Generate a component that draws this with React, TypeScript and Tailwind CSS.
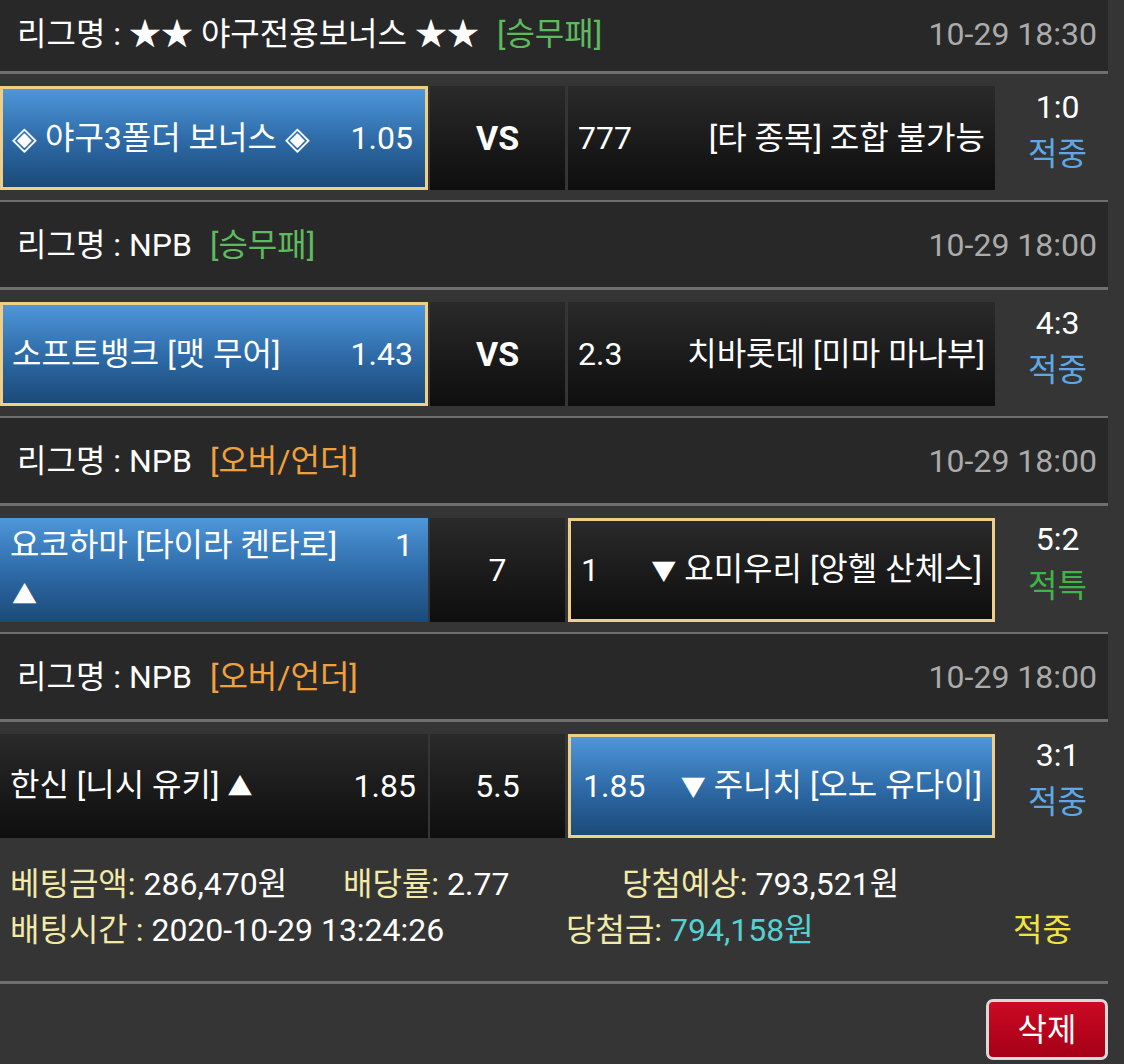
import React from 'react';

type Tone = 'blue' | 'black';

function Cell({
  tone,
  picked,
  className = '',
  children,
}: {
  tone: Tone;
  picked?: boolean;
  className?: string;
  children: React.ReactNode;
}) {
  const bg =
    tone === 'blue'
      ? 'bg-linear-to-b from-[#4e97da] via-[#2f6ca9] to-[#1b4a79]'
      : 'bg-linear-to-b from-[#2a2a2a] to-[#0e0e0e]';
  const border = picked ? 'border-[3px] border-[#efcf86]' : '';
  return (
    <div className={`h-[104px] shrink-0 text-white ${bg} ${border} ${className}`}>
      {children}
    </div>
  );
}

// triangles from the CJK font come out too wide at full size
function Tri({ up }: { up?: boolean }) {
  return <span className="text-[25px]">{up ? '▲' : '▼'}</span>;
}

function Header({ name, tag, tagColor, time, first }: { name: string; tag: string; tagColor: string; time: string; first?: boolean }) {
  return (
    <div
      className={`flex items-center justify-between bg-[#282828] pl-[17px] pr-[11px] ${
        first ? 'h-[71px] pb-[4px]' : 'h-[85px]'
      }`}
    >
      <div className="flex items-center text-white">
        <span>{name}</span>
        <span className={`ml-[18px] ${tagColor}`}>{tag}</span>
      </div>
      <span className="text-[#ababab]">{time}</span>
    </div>
  );
}

function Score({ score, result, color }: { score: string; result: string; color: string }) {
  return (
    <div className="flex h-[104px] flex-1 flex-col items-center justify-center pb-[14px] pl-[12px] leading-[47px]">
      <span className="text-white">{score}</span>
      <span className={color}>{result}</span>
    </div>
  );
}

function Line({ thick }: { thick?: boolean }) {
  return <div className={`${thick ? 'h-[3px]' : 'h-[2px]'} bg-[#6f6f6f]`} />;
}

function MatchRow({ children, last }: { children: React.ReactNode; last?: boolean }) {
  return <div className={`flex items-start pt-[12px] ${last ? '' : 'pb-[10px]'}`}>{children}</div>;
}

export default function App() {
  return (
    <div className="min-h-screen bg-[#353535] font-['Roboto','Noto_Sans_CJK_KR',sans-serif] text-[32px] leading-[40px]">
      <div className="w-[1108px]">
        <Header first name="리그명 : ★★ 야구전용보너스 ★★" tag="[승무패]" tagColor="text-[#5dba5d]" time="10-29 18:30" />
        <Line thick />
        <MatchRow>
          <Cell tone="blue" picked className="flex w-[428px] items-center justify-between pl-[9px] pr-[12px]">
            <span>◈ 야구3폴더 보너스 ◈</span>
            <span>1.05</span>
          </Cell>
          <Cell tone="black" className="ml-[2px] flex w-[135px] items-center justify-center text-[34px] font-bold">
            VS
          </Cell>
          <Cell tone="black" className="ml-[3px] flex w-[427px] items-center justify-between pl-[10px] pr-[10px]">
            <span>777</span>
            <span>[타 종목] 조합 불가능</span>
          </Cell>
          <Score score="1:0" result="적중" color="text-[#5ea8e6]" />
        </MatchRow>
        <Line />

        <Header name="리그명 : NPB" tag="[승무패]" tagColor="text-[#5dba5d]" time="10-29 18:00" />
        <Line thick />
        <MatchRow>
          <Cell tone="blue" picked className="flex w-[428px] items-center justify-between pl-[9px] pr-[12px]">
            <span>소프트뱅크 [맷 무어]</span>
            <span>1.43</span>
          </Cell>
          <Cell tone="black" className="ml-[2px] flex w-[135px] items-center justify-center text-[34px] font-bold">
            VS
          </Cell>
          <Cell tone="black" className="ml-[3px] flex w-[427px] items-center justify-between pl-[10px] pr-[10px]">
            <span>2.3</span>
            <span>치바롯데 [미마 마나부]</span>
          </Cell>
          <Score score="4:3" result="적중" color="text-[#5ea8e6]" />
        </MatchRow>
        <Line />

        <Header name="리그명 : NPB" tag="[오버/언더]" tagColor="text-[#f0a13c]" time="10-29 18:00" />
        <Line thick />
        <MatchRow>
          <Cell tone="blue" className="flex w-[428px] flex-col justify-center pl-[10px] pr-[15px] leading-[48px]">
            <div className="flex justify-between">
              <span>요코하마 [타이라 켄타로]</span>
              <span>1</span>
            </div>
            <span className="pl-[2px]">
              <Tri up />
            </span>
          </Cell>
          <Cell tone="black" className="ml-[2px] flex w-[135px] items-center justify-center">
            7
          </Cell>
          <Cell tone="black" picked className="ml-[3px] flex w-[427px] items-center justify-between pl-[10px] pr-[10px]">
            <span>1</span>
            <span>
              <Tri /> 요미우리 [앙헬 산체스]
            </span>
          </Cell>
          <Score score="5:2" result="적특" color="text-[#3fb449]" />
        </MatchRow>
        <Line />

        <Header name="리그명 : NPB" tag="[오버/언더]" tagColor="text-[#f0a13c]" time="10-29 18:00" />
        <Line thick />
        <MatchRow last>
          <Cell tone="black" className="flex w-[428px] items-center justify-between pl-[10px] pr-[12px]">
            <span>
              한신 [니시 유키] <Tri up />
            </span>
            <span>1.85</span>
          </Cell>
          <Cell tone="black" className="ml-[2px] flex w-[135px] items-center justify-center">
            5.5
          </Cell>
          <Cell tone="blue" picked className="ml-[3px] flex w-[427px] items-center justify-between pl-[12px] pr-[10px]">
            <span>1.85</span>
            <span>
              <Tri /> 주니치 [오노 유다이]
            </span>
          </Cell>
          <Score score="3:1" result="적중" color="text-[#5ea8e6]" />
        </MatchRow>

        <div className="pt-[23px] pb-[28px] pl-[10px] leading-[46px]">
          <div className="flex">
            <span className="w-[333px] shrink-0">
              <span className="text-[#f1eaa9]">베팅금액:</span> <span className="text-white">286,470원</span>
            </span>
            <span className="w-[279px] shrink-0">
              <span className="text-[#f1eaa9]">배당률:</span> <span className="text-white">2.77</span>
            </span>
            <span>
              <span className="text-[#f1eaa9]">당첨예상:</span> <span className="text-white">793,521원</span>
            </span>
          </div>
          <div className="flex">
            <span className="w-[556px] shrink-0">
              <span className="text-[#f1eaa9]">배팅시간 :</span> <span className="text-white">2020-10-29 13:24:26</span>
            </span>
            <span className="w-[447px] shrink-0">
              <span className="text-[#f1eaa9]">당첨금:</span> <span className="text-[#55d0d3]">794,158원</span>
            </span>
            <span className="text-[#f2e43f]">적중</span>
          </div>
        </div>
        <Line thick />
        <div className="flex justify-end pt-[15px]">
          <button className="flex h-[61px] w-[122px] items-center justify-center rounded-[7px] border-[3px] border-[#d9d9d9] bg-linear-to-b from-[#cc0a24] to-[#a50016] text-white">
            삭제
          </button>
        </div>
      </div>
    </div>
  );
}
